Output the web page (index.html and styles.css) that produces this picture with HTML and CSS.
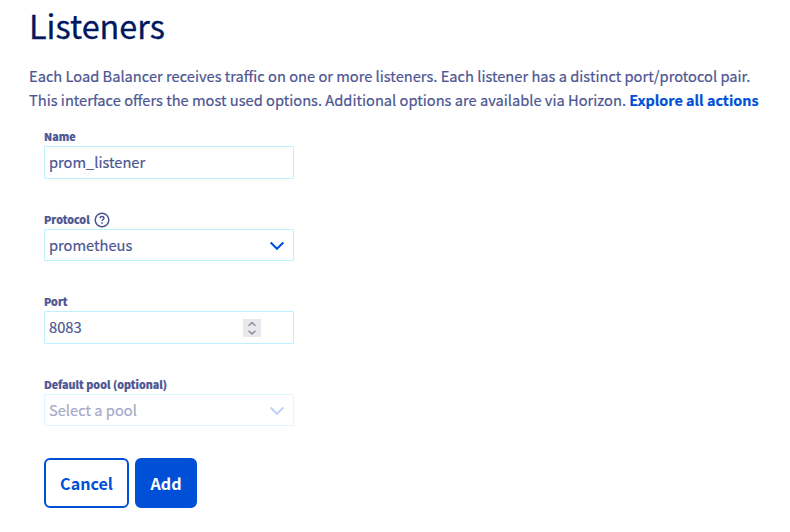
FILE: index.html
```html
<!DOCTYPE html>
<html lang="en">
<head>
<meta charset="utf-8">
<title>Listeners</title>
<link rel="stylesheet" href="styles.css">
</head>
<body>
<main class="page">
  <h1 class="title">Listeners</h1>
  <p class="intro">Each Load Balancer receives traffic on one or more listeners. Each listener has a distinct port/protocol pair.<br>This interface offers the most used options. Additional options are available via Horizon. <a class="link" href="#">Explore all actions</a></p>
  <form class="form">
    <div class="field">
      <div class="label"><span>Name</span></div>
      <div class="control"><span class="value">prom_listener</span></div>
    </div>
    <div class="field">
      <div class="label"><span>Protocol</span>
        <svg class="help" viewBox="0 0 16 16" fill="none" stroke="currentColor"><circle cx="8" cy="8" r="6.8" stroke-width="1.5"/><path d="M6.1 6.3C6.1 5.2 6.9 4.6 8 4.6s1.9.6 1.9 1.6c0 1.3-1.8 1.4-1.8 2.9" stroke-width="1.5"/><path d="M8.1 10.2v1.6" stroke-width="1.6"/></svg>
      </div>
      <div class="control select"><span class="value">prometheus</span>
        <svg class="chevron" viewBox="0 0 16 10"><path d="M1.7 1.5 8 7.8l6.3-6.3"/></svg>
      </div>
    </div>
    <div class="field">
      <div class="label"><span>Port</span></div>
      <div class="control"><span class="value">8083</span>
        <span class="spinner"><svg viewBox="0 0 18 18"><path d="M5.5 6.8 9 3.6l3.5 3.2M5.5 11.7 9 14.9l3.5-3.2"/></svg></span>
      </div>
    </div>
    <div class="field">
      <div class="label"><span>Default pool (optional)</span></div>
      <div class="control select disabled"><span class="value">Select a pool</span>
        <svg class="chevron" viewBox="0 0 16 10"><path d="M1.7 1.5 8 7.8l6.3-6.3"/></svg>
      </div>
    </div>
    <div class="actions">
      <button class="button cancel" type="button">Cancel</button>
      <button class="button add" type="button">Add</button>
    </div>
  </form>
</main>
</body>
</html>
```
FILE: styles.css
```css
* { box-sizing: border-box; }
body {
  margin: 0;
  background: #fff;
  color: #4d5592;
  font-family: "Noto Sans CJK JP", "Open Sans", sans-serif;
  font-size: 14.66px;
  font-weight: 400;
}
.page { padding: 2px 0 0 29px; }
.title {
  margin: 0;
  height: 46px;
  line-height: 46px;
  color: #00185e;
  font-size: 32.4px;
  font-weight: 400;
  -webkit-text-stroke: 0.3px;
}
.intro {
  margin: 16px 0 0;
  line-height: 24px;
  white-space: nowrap;
  -webkit-text-stroke: 0.2px;
}
.link { color: #0050d7; font-size: 14.4px; font-weight: 700; text-decoration: none; }
.form { width: 265px; margin: 16px 0 0; padding-left: 15px; }
.field { height: 82.6px; }
.label {
  display: flex;
  align-items: center;
  gap: 4px;
  height: 18px;
  font-size: 10.7px;
  font-weight: 900;
}
.label span { padding-bottom: 1px; -webkit-text-stroke: 0.2px; }
.help { width: 16px; height: 16px; }
.control {
  display: flex;
  align-items: center;
  justify-content: space-between;
  height: 33px;
  padding: 0 4px;
  border: 1px solid #bef1ff;
  border-radius: 1px;
}
.value { padding-bottom: 2px; -webkit-text-stroke: 0.2px; }
.select { height: 32px; padding-right: 8px; }
.select .value { padding-bottom: 0; }
.chevron { width: 16px; height: 10px; margin-top: 2px; fill: none; stroke: #0050d7; stroke-width: 2; }
.disabled { border-color: #dff8ff; }
.disabled .value { color: #a6aac8; }
.disabled .chevron { stroke: #bfd3f5; }
.spinner { width: 18px; height: 18px; margin-right: 28px; background: #e9e9ed; }
.spinner svg { display: block; fill: none; stroke: #8f8f9d; stroke-width: 1.5; }
.actions { display: flex; gap: 6px; }
.button {
  height: 50px;
  padding: 0;
  border: 2px solid #0050d7;
  border-radius: 6px;
  font: 700 16.1px "Noto Sans CJK JP", "Open Sans", sans-serif;
}
.cancel { width: 85px; background: #fff; color: #0050d7; }
.add { width: 62px; background: #0050d7; color: #fff; }
```
